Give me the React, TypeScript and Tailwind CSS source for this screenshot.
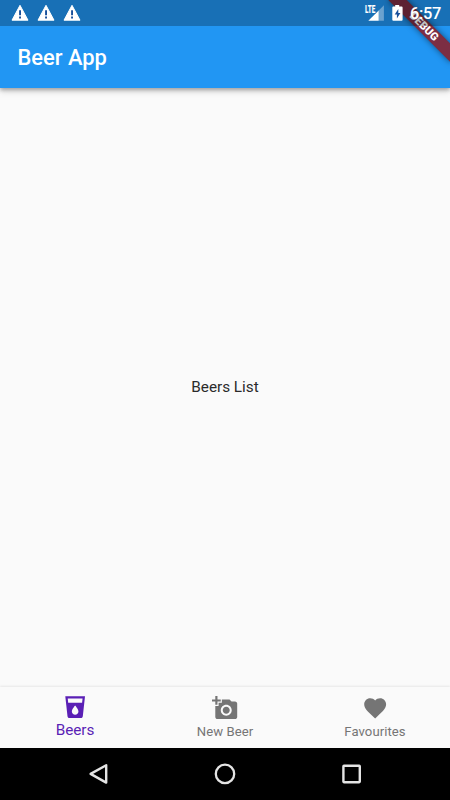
import React from "react";

function WarningIcon() {
  return (
    <svg className="h-[18px] w-[18px]" viewBox="0 0 18 18">
      <path d="M9 1.3 17 16.2H1Z" fill="#fff" stroke="#fff" strokeWidth="1" strokeLinejoin="round" />
      <path d="M8.1 6.3h1.9v5H8.1zM8.1 12.5h1.9v1.9H8.1z" fill="#174f9b" />
    </svg>
  );
}

function StatusBar() {
  return (
    <div className="absolute inset-x-0 top-0 flex h-[26px] bg-black/25 text-white">
      <div className="flex gap-[8.3px] pl-[10.6px] pt-[4px]">
        <WarningIcon />
        <WarningIcon />
        <WarningIcon />
      </div>
      <div className="ml-auto flex pr-[9px]">
        <svg className="mt-[4px] h-[18px] w-[20px]" viewBox="0 0 20 18">
          <path d="M19.9 1.2v15.6h-5.2V6.4z" fill="#6ba2cf" />
          <path d="M14.7 6.4v10.4H4.3z" fill="#fff" />
          <text x="1" y="8.8" fill="#fff" stroke="#1970b6" strokeWidth="0.9" paintOrder="stroke" fontFamily="Roboto, sans-serif" fontSize="10.8" fontWeight="900" textLength="10.4" lengthAdjust="spacingAndGlyphs">LTE</text>
        </svg>
        <svg className="ml-[8px] mt-[4px] h-[18px] w-[11px]" viewBox="0 0 11 18">
          <path d="M3.2 1h4v1.5h2.4q1 0 1 1v12.3q0 1-1 1H1.3q-1 0-1-1V3.5q0-1 1-1h1.9z" fill="#fff" />
          <path d="M6.3 5 2.7 10.4h2.2v4L8.4 8.9H6.3z" fill="#174f9b" />
        </svg>
        <div className="ml-[6.5px] pt-[1px] text-[16.4px] font-medium leading-[26px] tracking-[-0.3px]">6:57</div>
      </div>
    </div>
  );
}

function DebugBanner() {
  return (
    <div className="pointer-events-none absolute right-0 top-0 h-[90px] w-[90px] overflow-hidden">
      <div className="absolute left-[63.7px] top-[19.6px] flex h-[13.2px] w-[87.6px] origin-center -translate-x-1/2 rotate-45 items-center justify-center bg-[#7c2e43] text-[11.1px] font-black leading-none text-white shadow-[0_0_6px_rgba(0,0,0,0.5)]">
        DEBUG
      </div>
    </div>
  );
}

const DRINK = "M3 2l2.01 18.23C5.13 21.23 5.97 22 7 22h10c1.03 0 1.87-.77 1.99-1.77L21 2H3zm9 17c-1.66 0-3-1.34-3-3 0-2 3-5.4 3-5.4s3 3.4 3 5.4c0 1.66-1.34 3-3 3zm6.33-11H5.67l-.44-4h13.55l-.45 4z";
const PHOTO = "M3 4V1h2v3h3v2H5v3H3V6H0V4h3zm3 6V7h3V4h7l1.83 2H21c1.1 0 2 .9 2 2v12c0 1.1-.9 2-2 2H5c-1.1 0-2-.9-2-2V10h3zm7 9c2.76 0 5-2.24 5-5s-2.24-5-5-5-5 2.24-5 5 2.24 5 5 5zm-3.2-5c0 1.77 1.43 3.2 3.2 3.2s3.2-1.43 3.2-3.2-1.43-3.2-3.2-3.2-3.2 1.43-3.2 3.2z";
const HEART = "M12 21.35l-1.45-1.32C5.4 15.36 2 12.28 2 8.5 2 5.42 4.42 3 7.5 3c1.74 0 3.41.81 4.5 2.09C13.09 3.81 14.76 3 16.5 3 19.58 3 22 5.42 22 8.5c0 3.78-3.4 6.86-8.55 11.54L12 21.35z";

function Tab({ label, path, active = false }: { label: string; path: string; active?: boolean }) {
  return (
    <div className={active ? "flex flex-1 flex-col items-center pt-[7px] text-[#5a1fb5]" : "flex flex-1 flex-col items-center pt-[8px] text-[#757575]"}>
      <svg className="h-[26.3px] w-[26.3px] shrink-0" viewBox="0 0 24 24" fill="currentColor">
        <path d={path} />
      </svg>
      <span className={active ? "mt-[1px] text-[15.3px] leading-[19px] tracking-[-0.03px]" : "mt-[1px] text-[13.1px] leading-[20px] tracking-[0.08px]"}>{label}</span>
    </div>
  );
}

export default function App() {
  return (
    <div className="relative flex h-[800px] w-[450px] flex-col overflow-hidden bg-[#fafafa] font-[Roboto,sans-serif]">
      <header className="flex h-[87.5px] shrink-0 items-center bg-[#2196f3] pl-[17.5px] pt-[30px] text-[21.9px] font-medium text-white shadow-[0_2px_4px_rgba(0,0,0,0.3),0_4px_7px_rgba(0,0,0,0.1)]">
        <h1>Beer App</h1>
      </header>
      <main className="flex flex-1 items-center justify-center pt-px text-[15.3px] tracking-[-0.02px] text-[#2a2a2a]">
        Beers List
      </main>
      <nav className="flex h-[61px] shrink-0 bg-[#fafafa] shadow-[0_-1px_2px_rgba(0,0,0,0.08)]">
        <Tab label="Beers" path={DRINK} active />
        <Tab label="New Beer" path={PHOTO} />
        <Tab label="Favourites" path={HEART} />
      </nav>
      <footer className="flex h-[52.5px] shrink-0 items-center bg-black pl-[87px]">
        <svg className="h-[24px] w-[24px]" viewBox="0 0 24 24" fill="none" stroke="#e4e4e4" strokeWidth="2.4" strokeLinejoin="round">
          <path d="M19.2 3.2v17.4L3.6 11.9z" />
        </svg>
        <svg className="ml-[102px] h-[24px] w-[24px]" viewBox="0 0 24 24" fill="none" stroke="#e4e4e4" strokeWidth="2.3">
          <circle cx="12" cy="11.9" r="9.2" />
        </svg>
        <svg className="ml-[103px] h-[24px] w-[24px]" viewBox="0 0 24 24" fill="none" stroke="#e4e4e4" strokeWidth="2.4" strokeLinejoin="round">
          <rect x="3.4" y="3.8" width="16.4" height="16.4" rx="0.6" />
        </svg>
      </footer>
      <DebugBanner />
      <StatusBar />
    </div>
  );
}
